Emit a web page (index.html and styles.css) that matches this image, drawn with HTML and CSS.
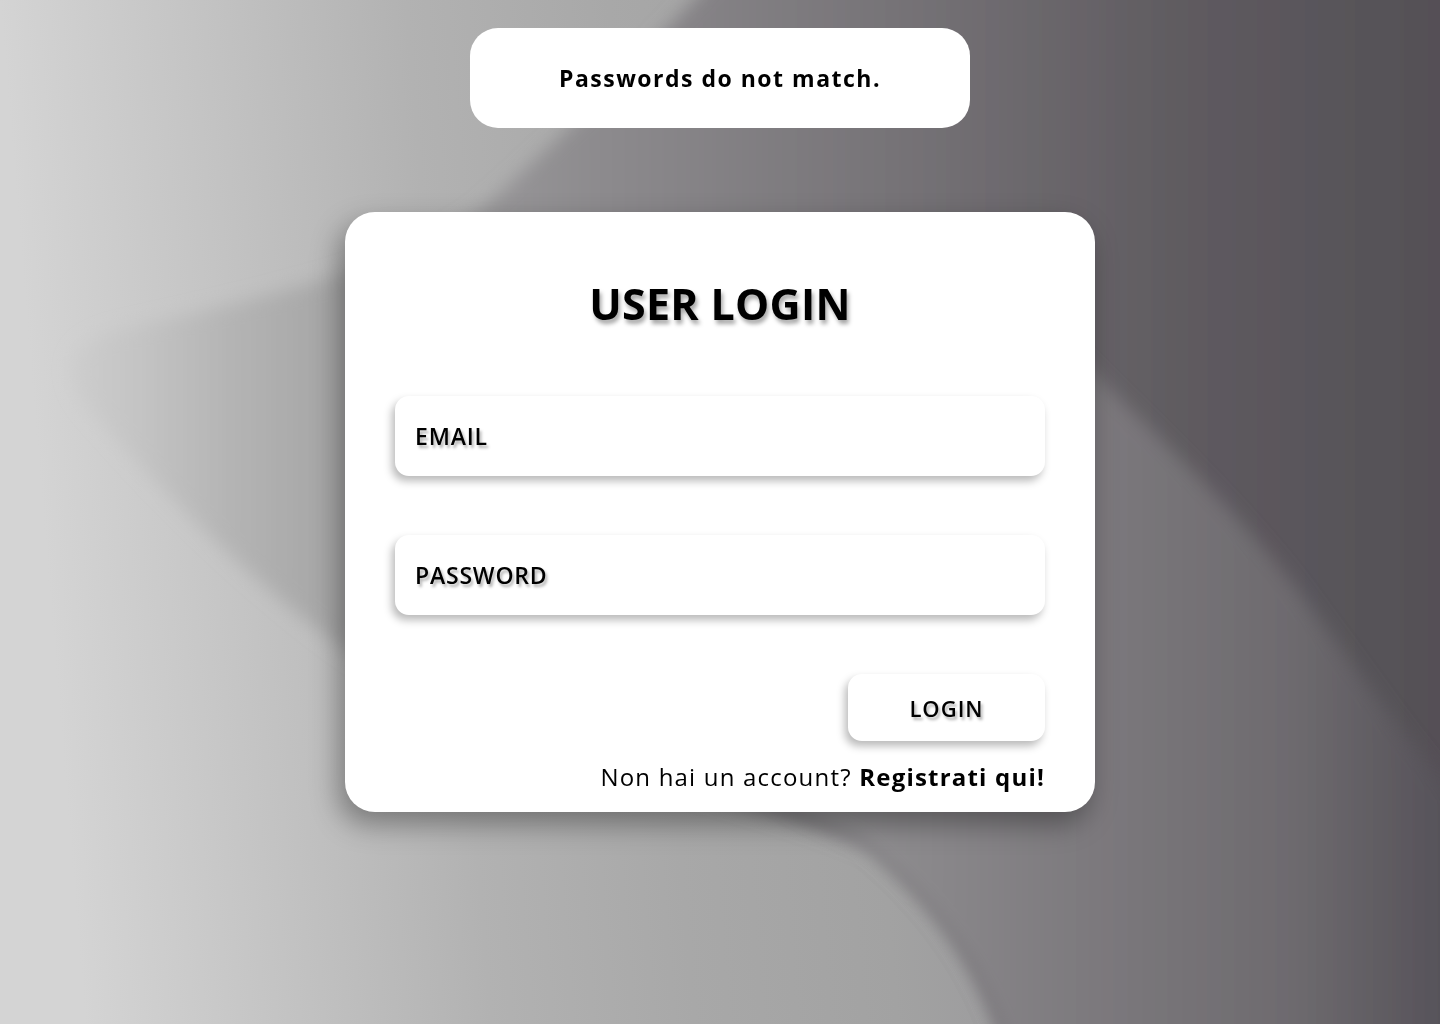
FILE: index.html
```html
<!DOCTYPE html>
<html lang="it">
<head>
<meta charset="utf-8">
<title>User Login</title>
<link rel="stylesheet" href="styles.css">
</head>
<body>
<svg class="bg" viewBox="0 0 1440 1024" preserveAspectRatio="none" aria-hidden="true">
  <defs>
    <linearGradient id="g1" gradientUnits="userSpaceOnUse" x1="0" y1="0" x2="1440" y2="-120">
      <stop offset="0" stop-color="#d4d4d4"/>
      <stop offset="0.14" stop-color="#c3c3c3"/>
      <stop offset="0.28" stop-color="#b2b2b2"/>
      <stop offset="0.42" stop-color="#a8a8a8"/>
      <stop offset="0.56" stop-color="#a2a2a2"/>
      <stop offset="0.7" stop-color="#98979a"/>
      <stop offset="1" stop-color="#807d81"/>
    </linearGradient>
    <linearGradient id="g2" gradientUnits="userSpaceOnUse" x1="0" y1="0" x2="1440" y2="0">
      <stop offset="0.04" stop-color="#cfcfcf"/>
      <stop offset="0.1" stop-color="#c3c3c3"/>
      <stop offset="0.16" stop-color="#b4b4b4"/>
      <stop offset="0.22" stop-color="#a8a8a8"/>
      <stop offset="0.42" stop-color="#8c8a8d"/>
      <stop offset="0.62" stop-color="#767377"/>
      <stop offset="0.83" stop-color="#5e5a5f"/>
      <stop offset="1" stop-color="#545056"/>
    </linearGradient>
    <linearGradient id="g3" gradientUnits="userSpaceOnUse" x1="0" y1="0" x2="1440" y2="0">
      <stop offset="0.55" stop-color="#959496"/>
      <stop offset="0.76" stop-color="#7c797d"/>
      <stop offset="0.9" stop-color="#6d6a6e"/>
      <stop offset="1" stop-color="#57535a"/>
    </linearGradient>
    <filter id="soft" x="-10%" y="-10%" width="120%" height="120%">
      <feGaussianBlur stdDeviation="9"/>
    </filter>
  </defs>
  <rect x="0" y="0" width="1440" height="1024" fill="url(#g1)"/>
  <path filter="url(#soft)" fill="url(#g2)" d="M730,-40 C640,60 560,140 480,210 C400,270 250,300 120,330 C60,345 60,380 100,420 C170,500 260,590 360,660 C520,760 760,800 870,850 C930,900 980,960 1010,1060 L1480,1060 L1480,-40 Z"/>
  <path filter="url(#soft)" fill="url(#g3)" d="M1060,340 C1150,430 1250,520 1320,620 C1380,700 1420,760 1480,820 L1480,1060 L1010,1060 C980,960 930,900 860,840 C760,790 700,760 700,700 C700,560 900,480 1060,340 Z"/>
</svg>

<main class="page">
  <div class="toast" role="alert">Passwords do not match.</div>

  <section class="card">
    <h1 class="title">USER LOGIN</h1>
    <form class="form">
      <input class="field" type="email" placeholder="EMAIL">
      <input class="field field-pass" type="password" placeholder="PASSWORD">
      <div class="actions">
        <button class="btn" type="button">LOGIN</button>
      </div>
      <p class="signup">Non hai un account? <a href="#" class="signup-link">Registrati qui!</a></p>
    </form>
  </section>
</main>
</body>
</html>
```

FILE: styles.css
```css
* {
  box-sizing: border-box;
}

html, body {
  margin: 0;
  padding: 0;
}

body {
  min-height: 100vh;
  font-family: "Open Sans", "Liberation Sans", sans-serif;
  color: #000;
  background: #a6a6a6;
}

.bg {
  position: fixed;
  inset: 0;
  width: 100%;
  height: 100%;
  z-index: -1;
  display: block;
}

.page {
  display: flex;
  flex-direction: column;
  align-items: center;
  padding-top: 28px;
}

.toast {
  width: 500px;
  height: 100px;
  background: #fff;
  border-radius: 28px;
  display: flex;
  align-items: center;
  justify-content: center;
  font-size: 23px;
  font-weight: 700;
  letter-spacing: 1.5px;
}

.card {
  margin-top: 84px;
  width: 750px;
  height: 600px;
  background: #fff;
  border-radius: 30px;
  padding: 62px 50px 20px;
  box-shadow: -6px 12px 28px rgba(0, 0, 0, 0.35);
  display: flex;
  flex-direction: column;
}

.title {
  margin: 0;
  height: 60px;
  line-height: 60px;
  text-align: center;
  font-size: 43px;
  font-weight: 700;
  letter-spacing: 0.3px;
  text-shadow: 2px 4px 4px rgba(0, 0, 0, 0.35);
}

.form {
  margin: 62px 0 0;
  display: flex;
  flex-direction: column;
  gap: 59px;
}

.field {
  display: block;
  width: 650px;
  height: 80px;
  border: none;
  outline: none;
  border-radius: 14px;
  background: #fff;
  padding: 0 20px;
  font-family: inherit;
  font-size: 23px;
  font-weight: 600;
  letter-spacing: 0.8px;
  color: #000;
  box-shadow: -3px 5px 8px rgba(0, 0, 0, 0.28);
  text-shadow: 2px 3px 3px rgba(0, 0, 0, 0.3);
}

.field::placeholder {
  color: #000;
  opacity: 1;
  text-shadow: 2px 3px 3px rgba(0, 0, 0, 0.3);
}

.actions {
  display: flex;
  justify-content: flex-end;
}

.btn {
  width: 197px;
  height: 67px;
  border: none;
  border-radius: 14px;
  background: #fff;
  font-family: inherit;
  font-size: 22px;
  font-weight: 600;
  letter-spacing: 1px;
  color: #000;
  cursor: pointer;
  box-shadow: -3px 5px 8px rgba(0, 0, 0, 0.28);
  text-shadow: 2px 3px 3px rgba(0, 0, 0, 0.3);
}

.signup {
  margin: -38px 0 0;
  text-align: right;
  font-size: 24px;
  line-height: 30px;
  font-weight: 400;
  letter-spacing: 1.2px;
}

.signup-link {
  color: #000;
  font-weight: 700;
  text-decoration: none;
}
```
